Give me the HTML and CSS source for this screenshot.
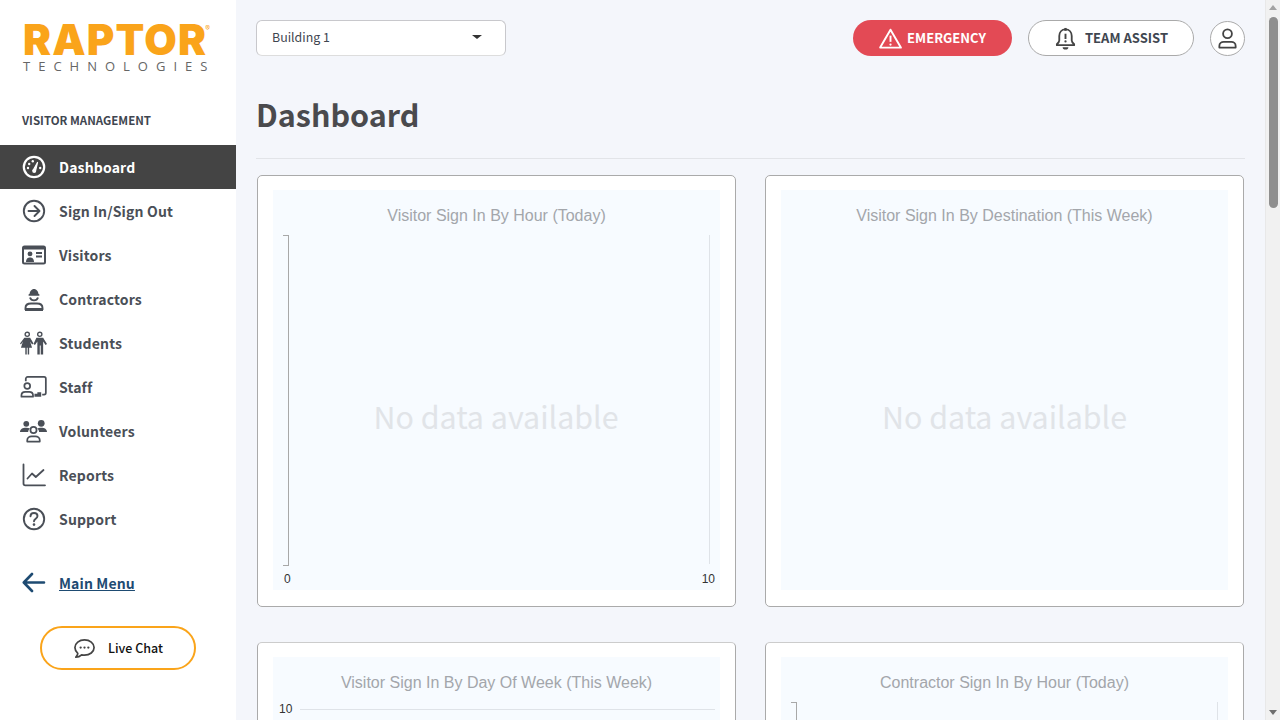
FILE: index.html
```html
<!DOCTYPE html>
<html>
	<head>
		<meta charset="utf-8" />
		<title>Dashboard</title>
		<link rel="stylesheet" href="styles.css">
	</head>
	<body>
		<div class="sidebar">
			<div class="logo">
				<div class="logo-name">RAPTOR<span class="logo-reg">®</span></div>
				<div class="logo-sub">TECHNOLOGIES</div>
			</div>
			<div class="nav-title">VISITOR MANAGEMENT</div>
			<ul class="nav">
				<li class="nav-item active">
					<svg class="nav-icon" viewBox="0 0 24 24"><circle cx="12" cy="12" r="10.2" fill="none" stroke="currentColor" stroke-width="2.2"/><path d="M11 15.5 15.5 7.5 13.4 16.4Z" fill="currentColor" stroke="currentColor" stroke-width="1.2" stroke-linejoin="round"/><circle cx="12.2" cy="16" r="2" fill="currentColor"/><circle cx="6" cy="13" r="1.2" fill="currentColor"/><circle cx="7.2" cy="9" r="1.2" fill="currentColor"/><circle cx="10.8" cy="6.3" r="1.2" fill="currentColor"/><circle cx="18.2" cy="13" r="1.2" fill="currentColor"/></svg>
					<span>Dashboard</span>
				</li>
				<li class="nav-item">
					<svg class="nav-icon" viewBox="0 0 24 24" fill="none" stroke="currentColor" stroke-width="1.9" stroke-linecap="round" stroke-linejoin="round"><circle cx="12" cy="12" r="10.2"/><path d="M6.5 12H17M12.5 7l5 5-5 5"/></svg>
					<span>Sign In/Sign Out</span>
				</li>
				<li class="nav-item">
					<svg class="nav-icon" viewBox="0 0 24 20"><rect x="1" y="1.500" width="22" height="17" rx="1.500" fill="none" stroke="currentColor" stroke-width="2"/><rect x="1" y="1" width="22" height="3.400" rx="1.200" fill="currentColor"/><circle cx="8" cy="8.800" r="2.400" fill="currentColor"/><path d="M4 17c0-3.400 1.800-4.600 4-4.600s4 1.200 4 4.600Z" fill="currentColor"/><path d="M14 8h6M14 11.500h6" stroke="currentColor" stroke-width="1.800"/></svg>
					<span>Visitors</span>
				</li>
				<li class="nav-item">
					<svg class="nav-icon" viewBox="0 0 24 24"><path d="M7.500 7.500c0-3 2-5.500 4.500-5.500s4.500 2.500 4.500 5.500Z" fill="currentColor"/><rect x="6.500" y="7" width="11" height="1.800" rx=".9" fill="currentColor"/><path d="M8 10.500a4.200 4.200 0 0 0 8 0" fill="none" stroke="currentColor" stroke-width="1.900"/><path d="M3.500 23v-2c0-3 2.500-4.500 5.500-4.500h6c3 0 5.500 1.500 5.500 4.500v2" fill="none" stroke="currentColor" stroke-width="1.900"/><path d="M3 21h18v3H3Z" fill="currentColor"/></svg>
					<span>Contractors</span>
				</li>
				<li class="nav-item">
					<svg class="nav-icon wide" viewBox="0 0 28 24" fill="currentColor"><circle cx="7.500" cy="3" r="2.200" fill="none" stroke="currentColor" stroke-width="1.400"/><circle cx="20.500" cy="3" r="2.200" fill="none" stroke="currentColor" stroke-width="1.400"/><path d="M4.500 6.500h6l3.500 6-1.500 1-2-3 2 6.500H9.500v7H8v-7H7v7H5.500v-7H1l2-6.500-2 3-1-1Z"/><path d="M17 6.500h7l4 6.500-1.500 1-2.500-3.600V24h-2.500v-9.500h-1V24H18V10.400l-2.500 3.600-1.500-1Z"/></svg>
					<span>Students</span>
				</li>
				<li class="nav-item">
					<svg class="nav-icon wide" viewBox="0 0 28 24"><path d="M6 6V3.500C6 2.500 6.800 1.500 8 1.500h17c1 0 1.800.8 1.800 2v14.500c0 1-.8 1.800-1.800 1.800h-2" fill="none" stroke="currentColor" stroke-width="1.800"/><circle cx="7.500" cy="11" r="3" fill="none" stroke="currentColor" stroke-width="1.800"/><path d="M1.500 22v-1.500c0-2.500 2-3.500 4-3.500h4c2 0 4 1 4 3.500V22Z" fill="none" stroke="currentColor" stroke-width="1.800" stroke-linejoin="round"/><path d="M15 22v-3h3v-1.500h4V22Z" fill="currentColor"/></svg>
					<span>Staff</span>
				</li>
				<li class="nav-item">
					<svg class="nav-icon wide" viewBox="0 0 28 24" fill="currentColor"><circle cx="6.500" cy="4.500" r="3"/><circle cx="22" cy="4" r="3.500"/><path d="M0 13c0-3 2.500-4.500 6.500-4.500 1.500 0 2.800.3 3.800.8-1.300 1-1.800 2.400-1.800 3.700Z"/><path d="M28 13c0-3-2.500-4.500-6-4.500-1.800 0-3 .3-4.200.8 1.400 1 2 2.400 2 3.700Z"/><circle cx="14" cy="11" r="3.200" fill="none" stroke="currentColor" stroke-width="1.800"/><path d="M7.500 23v-1.500c0-2.500 2.200-4 4.500-4h4c2.300 0 4.500 1.500 4.500 4V23Z" fill="none" stroke="currentColor" stroke-width="1.800" stroke-linejoin="round"/></svg>
					<span>Volunteers</span>
				</li>
				<li class="nav-item">
					<svg class="nav-icon" viewBox="0 0 24 24" fill="none" stroke="currentColor" stroke-linecap="round" stroke-linejoin="round" stroke-width="1.800"><path d="M1.500 1.500v19c0 1 .6 1.800 1.800 1.800H23"/><path d="M5.500 15.500 10 10.500l3.800 3.500L21.500 7"/></svg>
					<span>Reports</span>
				</li>
				<li class="nav-item">
					<svg class="nav-icon" viewBox="0 0 24 24"><circle cx="12" cy="12" r="10.200" fill="none" stroke="currentColor" stroke-width="1.900"/><path d="M8.500 9.300c0-2 1.600-3.300 3.500-3.300s3.500 1.200 3.500 3c0 2.800-3.500 2.700-3.500 5.300" fill="none" stroke="currentColor" stroke-width="1.900" stroke-linecap="round"/><circle cx="12" cy="17.600" r="1.300" fill="currentColor"/></svg>
					<span>Support</span>
				</li>
			</ul>
			<a class="main-menu" href="#">
				<svg class="nav-icon" viewBox="0 0 24 24" fill="none" stroke="currentColor" stroke-width="2.600" stroke-linecap="round" stroke-linejoin="round"><path d="M2 11.500H22M10 3 1.800 11.500 10 20"/></svg>
				<span>Main Menu</span>
			</a>
			<div class="chat-wrap">
				<div class="chat-btn">
					<svg class="chat-icon" viewBox="0 0 24 24"><path d="M12 3c5.500 0 10 3.500 10 8s-4.500 8-10 8c-1 0-2-.1-3-.4C7.500 20 5.500 21 3 21c1-1 2-2.500 2-4-1.800-1.500-3-3.600-3-6 0-4.500 4.500-8 10-8Z" fill="none" stroke="#444" stroke-width="1.800" stroke-linejoin="round"/><circle cx="8" cy="11" r="1.200" fill="#444"/><circle cx="12" cy="11" r="1.200" fill="#444"/><circle cx="16" cy="11" r="1.200" fill="#444"/></svg>
					<span>Live Chat</span>
				</div>
			</div>
		</div>

		<div class="main">
			<div class="topbar">
				<div class="building-select">
					<span>Building 1</span>
					<i class="caret"></i>
				</div>
				<div class="top-actions">
					<div class="pill emergency">
						<svg class="pill-icon" viewBox="0 0 24 22"><path d="M12 1.800 22.800 20.500H1.200Z" fill="none" stroke="#fff" stroke-width="2" stroke-linejoin="round"/><path d="M12 8v6.500" stroke="#fff" stroke-width="2"/><circle cx="12" cy="17.300" r="1.200" fill="#fff"/></svg>
						<span>EMERGENCY</span>
					</div>
					<div class="pill assist">
						<svg class="pill-icon" viewBox="0 0 24 24"><path d="M12 2.500c4 0 6.500 3 6.500 7v4.500c0 1.500 1.500 3 2.500 4v1H3v-1c1-1 2.500-2.500 2.500-4V9.500c0-4 2.500-7 6.500-7Z" fill="none" stroke="#444" stroke-width="1.900" stroke-linejoin="round"/><rect x="10.800" y="1" width="2.400" height="3" fill="#444"/><path d="M9 21h6a3 2.600 0 0 1-6 0Z" fill="#444"/><path d="M12 7v5.500" stroke="#444" stroke-width="2"/><circle cx="12" cy="15" r="1.200" fill="#444"/></svg>
						<span>TEAM ASSIST</span>
					</div>
					<div class="user-btn">
						<svg class="user-icon" viewBox="0 0 24 24" fill="none" stroke="#444" stroke-width="1.900" stroke-linejoin="round"><circle cx="12" cy="7" r="4.600"/><path d="M3.500 21.500v-1.800c0-2.700 2.200-4.200 4.500-4.200h8c2.300 0 4.500 1.500 4.500 4.200v1.800Z"/></svg>
					</div>
				</div>
			</div>
			<h1 class="page-title">Dashboard</h1>
			<div class="cards">
				<div class="card">
					<div class="chart">
						<div class="chart-title">Visitor Sign In By Hour (Today)</div>
						<div class="plot axes"><div class="no-data">No data available</div></div>
						<div class="x-labels"><span>0</span><span>10</span></div>
					</div>
				</div>
				<div class="card">
					<div class="chart">
						<div class="chart-title">Visitor Sign In By Destination (This Week)</div>
						<div class="plot"><div class="no-data">No data available</div></div>
					</div>
				</div>
				<div class="card">
					<div class="chart">
						<div class="chart-title">Visitor Sign In By Day Of Week (This Week)</div>
						<div class="y-row"><span>10</span><i class="grid-line"></i></div>
					</div>
				</div>
				<div class="card">
					<div class="chart">
						<div class="chart-title">Contractor Sign In By Hour (Today)</div>
						<div class="plot axes"></div>
					</div>
				</div>
			</div>
		</div>

		<div class="scrollbar">
			<i class="arrow-up"></i>
			<div class="thumb"></div>
			<i class="arrow-down"></i>
		</div>
	</body>
</html>
```

FILE: styles.css
```css
*{
	margin: 0;
	padding: 0;
	box-sizing: border-box;
}
html,body{
	height: 720px;
	overflow: hidden;
}
body{
	display: flex;
	background: #f4f6fb;
	font-family: "Noto Sans CJK SC", "Noto Sans", sans-serif;
	color: #444;
}
ul{
	list-style: none;
}

/* sidebar */
.sidebar{
	width: 236px;
	flex: none;
	height: 720px;
	background: #fff;
}
.logo{
	padding: 25px 0 0 23px;
	height: 111px;
}
.logo-name{
	font-family: Inter, sans-serif;
	font-weight: 900;
	font-size: 42px;
	line-height: 30px;
	letter-spacing: 1.2px;
	color: #faa41a;
	white-space: nowrap;
}
.logo-reg{
	font-size: 7px;
	font-weight: 400;
	letter-spacing: 0;
	line-height: 8px;
	vertical-align: top;
	margin-left: -2px;
}
.logo-sub{
	font-family: "Open Sans", sans-serif;
	font-size: 13px;
	line-height: 14px;
	margin-top: 4px;
	letter-spacing: 8px;
	color: #666;
	white-space: nowrap;
}
.nav-title{
	font-size: 11.5px;
	font-weight: 700;
	line-height: 18px;
	padding-left: 22px;
	color: #3f4650;
}
.nav{
	margin-top: 16px;
}
.nav-item{
	display: flex;
	align-items: center;
	height: 44px;
	padding-left: 22px;
	font-size: 14px;
	font-weight: 700;
	letter-spacing: .15px;
	color: #4a4f57;
}
.nav-item span,.main-menu span{
	padding-bottom: 1px;
}
.nav-item.active{
	background: #444;
	color: #fff;
}
.nav-icon{
	width: 24px;
	height: 24px;
	flex: none;
	margin-right: 13px;
}
.nav-icon.wide{
	width: 27px;
	margin-left: -2px;
	margin-right: 12px;
}
.main-menu{
	display: flex;
	align-items: center;
	height: 44px;
	margin-top: 20px;
	padding-left: 22px;
	font-size: 14px;
	font-weight: 700;
	letter-spacing: .15px;
	color: #1e4b72;
}
.chat-wrap{
	padding: 21px 0 0 40px;
}
.chat-btn{
	display: flex;
	align-items: center;
	justify-content: center;
	width: 156px;
	height: 44px;
	border: 2px solid #faa41a;
	border-radius: 22px;
	background: #fff;
	font-size: 12.5px;
	font-weight: 500;
	color: #111;
}
.chat-btn span{
	padding-bottom: 1px;
}
.chat-icon{
	width: 23px;
	height: 23px;
	margin-right: 12px;
}

/* main column */
.main{
	flex: 1;
	min-width: 0;
	padding: 20px 20px 0 20px;
}
.topbar{
	display: flex;
	justify-content: space-between;
	align-items: center;
	height: 36px;
}
.building-select{
	display: flex;
	justify-content: space-between;
	align-items: center;
	width: 250px;
	height: 36px;
	padding: 0 23px 0 15px;
	background: #fff;
	border: 1px solid #c8c8cc;
	border-bottom-color: #ddd;
	border-radius: 6px;
	font-size: 12.4px;
	color: #3f4650;
}
.building-select span{
	padding-bottom: 3px;
}
.caret{
	width: 0;
	height: 0;
	border-left: 5px solid transparent;
	border-right: 5px solid transparent;
	border-top: 4px solid #333;
	margin-top: -3px;
}
.top-actions{
	display: flex;
	align-items: center;
}
.pill{
	display: flex;
	align-items: center;
	justify-content: center;
	height: 36px;
	border-radius: 18px;
	font-size: 13px;
	font-weight: 700;
}
.pill span{
	padding-bottom: 1px;
}
.pill-icon{
	width: 23px;
	height: 23px;
}
.emergency{
	width: 159px;
	background: #e34a55;
	color: #fff;
}
.emergency .pill-icon{
	margin-right: 5px;
}
.assist{
	width: 166px;
	margin-left: 16px;
	background: #fff;
	border: 1px solid #aaa;
	color: #3f4650;
}
.assist .pill-icon{
	margin-right: 8px;
}
.user-btn{
	display: flex;
	align-items: center;
	justify-content: center;
	width: 35px;
	height: 35px;
	margin-left: 16px;
	background: #fff;
	border: 1px solid #aaa;
	border-radius: 50%;
}
.user-icon{
	width: 23px;
	height: 23px;
}
.page-title{
	margin-top: 37px;
	height: 66px;
	font-size: 30.5px;
	font-weight: 700;
	line-height: 42px;
	color: #4a4a4d;
	border-bottom: 1px solid #e2e4e8;
}
.cards{
	display: grid;
	grid-template-columns: 479px 479px;
	column-gap: 29px;
	row-gap: 35px;
	padding: 16px 0 0 1px;
}
.card{
	height: 432px;
	padding: 14px 15px 16px;
	background: #fff;
	border: 1px solid #aaa;
	border-radius: 5px;
}
.card:nth-child(n+3){
	border-top-color: #ccc;
}
.chart{
	height: 100%;
	background: #f7fbff;
	padding: 0 11px;
}
.chart-title{
	font-family: "Liberation Sans", sans-serif;
	font-size: 16px;
	line-height: 18px;
	padding-top: 17px;
	height: 45px;
	text-align: center;
	color: #a3a6ab;
}
.plot{
	display: flex;
	align-items: center;
	justify-content: center;
	height: 329px;
	padding-top: 32px;
}
.axes{
	border-right: 1px solid #dfe3e8;
	position: relative;
	margin: 0 -1px;
}
/* little bracket on the left of the hour charts */
.axes::before{
	content: "";
	position: absolute;
	left: 0;
	top: 0;
	width: 5px;
	height: 100%;
	border: 1px solid #a8a8a8;
	border-left: 0;
}
.no-data{
	font-size: 30.4px;
	font-weight: 400;
	color: #e1e4e8;
}
.x-labels{
	display: flex;
	justify-content: space-between;
	font-family: "Liberation Sans", sans-serif;
	font-size: 12px;
	line-height: 14px;
	padding-top: 8px;
	margin: 0 -6px 0 0;
	color: #333;
}
.y-row{
	display: flex;
	align-items: center;
	font-family: "Liberation Sans", sans-serif;
	font-size: 12px;
	line-height: 14px;
	margin: 0 -6px 0 -5px;
	color: #333;
}
.grid-line{
	flex: 1;
	height: 1px;
	margin-left: 8px;
	background: #dfe3e8;
}

/* scrollbar on the right edge */
.scrollbar{
	display: flex;
	flex-direction: column;
	align-items: center;
	width: 15px;
	flex: none;
	height: 720px;
	background: #f1f1f1;
	border-left: 1px solid #e8e8e8;
}
.arrow-up,.arrow-down{
	width: 0;
	height: 0;
	border-left: 4px solid transparent;
	border-right: 4px solid transparent;
}
.arrow-up{
	border-bottom: 5px solid #a3a3a3;
	margin-top: 5px;
}
.thumb{
	width: 9px;
	height: 191px;
	margin-top: 7px;
	background: #8f8f8f;
	border-radius: 5px;
}
.arrow-down{
	border-top: 5px solid #6f6f6f;
	margin-top: auto;
	margin-bottom: 5px;
}
```
